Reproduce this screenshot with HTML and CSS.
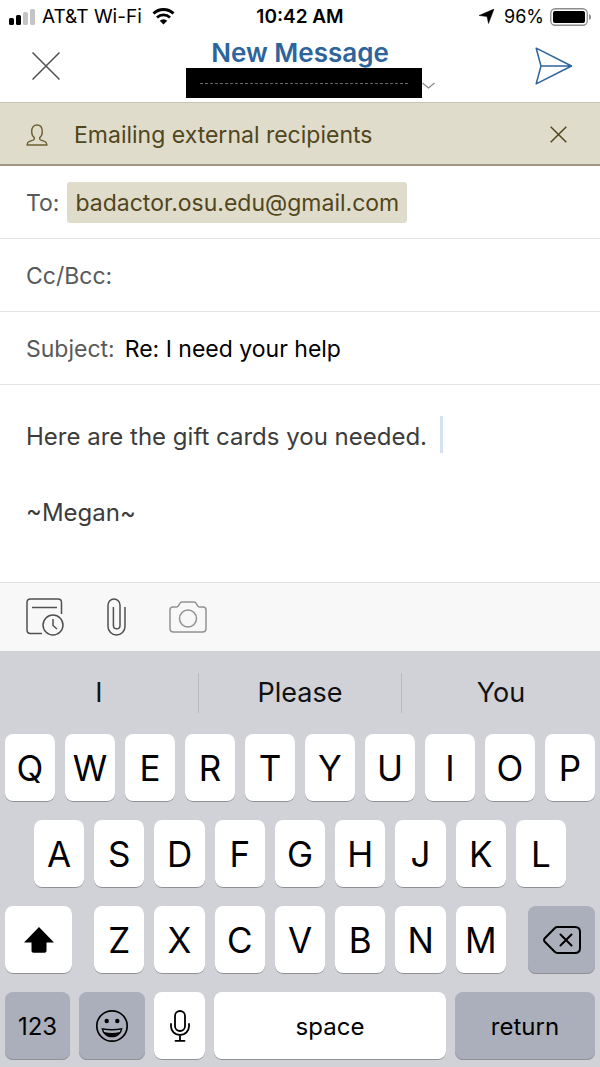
FILE: index.html
```html
<!DOCTYPE html>
<html lang="en">
<head>
  <meta charset="UTF-8">
  <meta name="viewport" content="width=device-width, initial-scale=1.0">
  <title>New Message</title>
  <link rel="stylesheet" href="styles.css">
</head>
<body>
  <div class="screen">

    <div class="status">
      <div class="status__side">
        <svg class="status__signal" width="27" height="17" viewBox="0 0 27 17">
          <rect x="1" y="10" width="5" height="7" rx="1.5" fill="#000"/>
          <rect x="8" y="7" width="5" height="10" rx="1.5" fill="#000"/>
          <rect x="15" y="4" width="5" height="13" rx="1.5" fill="#c4c4c4"/>
          <rect x="22" y="1" width="5" height="16" rx="1.5" fill="#c4c4c4"/>
        </svg>
        <span>AT&amp;T Wi-Fi</span>
        <svg class="status__wifi" width="23" height="17" viewBox="0 0 23 17">
          <path d="M1.5 5.500a14.500 14.500 0 0 1 20 0" fill="none" stroke="#000" stroke-width="3"/>
          <path d="M5 9.500a9.500 9.500 0 0 1 13 0" fill="none" stroke="#000" stroke-width="2.800"/>
          <path d="M11.500 16.500 7.800 12.800a5.300 5.300 0 0 1 7.400 0z" fill="#000"/>
        </svg>
      </div>
      <span class="status__time">10:42 AM</span>
      <div class="status__side status__side--right">
        <svg width="15" height="15" viewBox="0 0 15 15"><path d="M15 0 9.500 14.500 8 7.500 0 6.500z" fill="#000" stroke="#000" stroke-width=".500" stroke-linejoin="round"/></svg>
        <span class="status__percent">96%</span>
        <svg width="42" height="18" viewBox="0 0 42 18">
          <rect x="0.750" y="0.750" width="36.500" height="16.500" rx="4.500" fill="none" stroke="#8c8c8c" stroke-width="1.300"/>
          <rect x="3" y="3" width="32" height="12" rx="2" fill="#000"/>
          <path d="M39 6c2.700 1 2.700 5 0 6z" fill="#8c8c8c"/>
        </svg>
      </div>
    </div>

    <header class="header">
      <button class="icon-btn header__close" type="button" aria-label="Close">
        <svg width="28" height="28" viewBox="0 0 28 28"><path d="M.500.500l27 27M27.500.500l-27 27" fill="none" stroke="#505050" stroke-width="1.500"/></svg>
      </button>
      <div class="header__center">
        <h1 class="header__title">New Message</h1>
        <button class="account" type="button" aria-label="Change account">
          <span class="account__name"><span class="account__dashes"></span></span>
          <svg class="account__chevron" width="13" height="7" viewBox="0 0 13 7"><path d="M.500 1l6 5 6-5" fill="none" stroke="#8a8a8a" stroke-width="1.200"/></svg>
        </button>
      </div>
      <button class="icon-btn header__send" type="button" aria-label="Send">
        <svg width="38" height="38" viewBox="0 0 38 38"><path d="M1.200 1.200 36.500 19 1.200 36.800 6 19zM6 19h30" fill="none" stroke="#2d649c" stroke-width="1.500" stroke-linejoin="round"/></svg>
      </button>
    </header>

    <div class="banner">
      <svg width="22" height="22" viewBox="0 0 22 22"><path d="M8.300 13.600C6.600 12.500 5.700 10.500 5.700 7.500 5.700 3.500 7.700 1 11 1s5.300 2.500 5.300 6.500c0 3-.900 5-2.600 6.100v1.200c0 .800.500 1.100 1.300 1.400l3.500 1.200c1.600.600 2.300 1.600 2.500 3.600H1c.200-2 .900-3 2.500-3.600L7 16.200c.800-.300 1.300-.600 1.300-1.400z" fill="none" stroke="#6b6032" stroke-width="1.400" stroke-linejoin="round"/></svg>
      <span class="banner__text">Emailing external recipients</span>
      <button class="icon-btn" type="button" aria-label="Dismiss">
        <svg width="17" height="17" viewBox="0 0 17 17"><path d="M.700.700l15.600 15.600M16.300.700.700 16.300" fill="none" stroke="#51461c" stroke-width="1.500"/></svg>
      </button>
    </div>

    <form class="compose">
      <div class="field">
        <label class="field__label" for="to">To:</label>
        <button class="chip" type="button">badactor.osu.edu@gmail.com</button>
        <input class="field__input" id="to" type="text">
      </div>
      <div class="field">
        <label class="field__label" for="cc">Cc/Bcc:</label>
        <input class="field__input" id="cc" type="text">
      </div>
      <div class="field">
        <label class="field__label" for="subject">Subject:</label>
        <input class="field__input" id="subject" type="text" value="Re: I need your help">
      </div>
      <div class="message">
        <textarea class="message__text" aria-label="Message" rows="3">Here are the gift cards you needed.

~Megan~</textarea>
        <span class="message__caret"></span>
      </div>
    </form>

    <div class="tools">
      <button class="icon-btn" type="button" aria-label="Availability">
        <svg width="38" height="38" viewBox="0 0 38 38" fill="none" stroke="#505050" stroke-width="1.500">
          <path d="M16 35.500H4.500c-2.500 0-3.500-1-3.500-3.500V4.500C1 2 2 1 4.500 1H32c2.500 0 3.500 1 3.500 3.500V16M6 9.500h25"/>
          <circle cx="27" cy="27" r="10"/>
          <path d="M27 21v6.500l4 3.500"/>
        </svg>
      </button>
      <button class="icon-btn" type="button" aria-label="Attach file">
        <svg width="19" height="38" viewBox="0 0 19 38" fill="none" stroke="#505050" stroke-width="1.500">
          <path d="M18 9v19.500a8.500 8.500 0 0 1-17 0V7a6 6 0 0 1 12 0v20.500a3.300 3.300 0 0 1-6.600 0V9"/>
        </svg>
      </button>
      <button class="icon-btn" type="button" aria-label="Take photo">
        <svg width="38" height="32" viewBox="0 0 38 32" fill="none" stroke="#929292" stroke-width="1.500">
          <path d="M4 6h3.500c1 0 1.500-.400 2-1.300l1.200-2C11.300 1.500 12 1 13.200 1h11.600c1.200 0 1.900.500 2.500 1.700l1.200 2c.500.900 1 1.300 2 1.300H34c2 0 3 1 3 3v18.500c0 2.500-1 3.500-3.500 3.500h-29C2 31 1 30 1 27.500V9c0-2 1-3 3-3z"/>
          <circle cx="19" cy="17.500" r="8.500"/>
        </svg>
      </button>
    </div>

    <div class="keyboard">
      <div class="suggest">
        <button class="suggest__item" type="button">I</button>
        <button class="suggest__item" type="button">Please</button>
        <button class="suggest__item" type="button">You</button>
      </div>
      <div class="keys">
        <div class="keys__row">
          <button class="key" type="button">Q</button>
          <button class="key" type="button">W</button>
          <button class="key" type="button">E</button>
          <button class="key" type="button">R</button>
          <button class="key" type="button">T</button>
          <button class="key" type="button">Y</button>
          <button class="key" type="button">U</button>
          <button class="key" type="button">I</button>
          <button class="key" type="button">O</button>
          <button class="key" type="button">P</button>
        </div>
        <div class="keys__row keys__row--inset">
          <button class="key" type="button">A</button>
          <button class="key" type="button">S</button>
          <button class="key" type="button">D</button>
          <button class="key" type="button">F</button>
          <button class="key" type="button">G</button>
          <button class="key" type="button">H</button>
          <button class="key" type="button">J</button>
          <button class="key" type="button">K</button>
          <button class="key" type="button">L</button>
        </div>
        <div class="keys__row keys__row--shift">
          <button class="key" type="button" aria-label="Shift">
            <svg width="30" height="26" viewBox="0 0 30 26"><path d="M15 0 30 15.500H22.500V23.500c0 1.500-.700 2.200-2.200 2.200H9.700c-1.500 0-2.200-.700-2.200-2.200V15.500H0z" fill="#000"/></svg>
          </button>
          <div class="keys__letters">
            <button class="key" type="button">Z</button>
            <button class="key" type="button">X</button>
            <button class="key" type="button">C</button>
            <button class="key" type="button">V</button>
            <button class="key" type="button">B</button>
            <button class="key" type="button">N</button>
            <button class="key" type="button">M</button>
          </div>
          <button class="key key--dark" type="button" aria-label="Delete">
            <svg width="38" height="28" viewBox="0 0 38 28" fill="none" stroke="#000" stroke-width="2" stroke-linejoin="round" stroke-linecap="round">
              <path d="M14.500 1H32c3.500 0 5 1.500 5 5v16c0 3.500-1.500 5-5 5H14.500c-1.200 0-2-.400-2.800-1.200L2 16c-1.300-1.300-1.300-2.700 0-4l9.700-9.800C12.500 1.400 13.300 1 14.500 1z"/>
              <path d="M17.500 8.500l11 11M28.500 8.500l-11 11"/>
            </svg>
          </button>
        </div>
        <div class="keys__row keys__row--bottom">
          <button class="key key--dark key--word" type="button">123</button>
          <button class="key key--dark" type="button" aria-label="Emoji">
            <svg width="34" height="34" viewBox="0 0 34 34">
              <circle cx="17" cy="17" r="15.200" fill="none" stroke="#000" stroke-width="1.700"/>
              <circle cx="11.700" cy="12" r="2.200"/>
              <circle cx="22.300" cy="12" r="2.200"/>
              <path d="M6.500 19c6.800 1.300 14.200 1.300 21 0-.800 5.800-5 9.300-10.500 9.300S7.300 24.800 6.500 19z" fill="#000"/>
              <path d="M8.300 20.700c5.700 1 11.700 1 17.400 0l-.900 2.300c-5 1.200-10.600 1.200-15.600 0z" fill="#abafbb"/>
            </svg>
          </button>
          <button class="key" type="button" aria-label="Dictation">
            <svg width="20" height="32" viewBox="0 0 20 32" fill="none" stroke="#000" stroke-width="1.800" stroke-linecap="round">
              <rect x="5" y="1" width="10" height="20" rx="5"/>
              <path d="M1 14v2.500a9 8.500 0 0 0 18 0V14M10 25v5.500M5.500 30.800h9"/>
            </svg>
          </button>
          <button class="key key--word" type="button">space</button>
          <button class="key key--dark key--word" type="button">return</button>
        </div>
      </div>
    </div>

  </div>
</body>
</html>
```
FILE: styles.css
```css
/* Reset */
* { margin: 0; padding: 0; box-sizing: border-box; }
body { font-family: Inter, "Liberation Sans", sans-serif; font-size: 24px; background-color: #fff; color: #000; }
button, input, textarea { font: inherit; color: inherit; background: none; border: none; outline: none; }
button { cursor: pointer; }
svg { display: block; flex: none; }

.screen { display: flex; flex-direction: column; min-height: 100vh; }
.icon-btn { display: flex; align-items: center; justify-content: center; }

/* Status bar */
.status {
  display: grid;
  grid-template-columns: 1fr auto 1fr;
  align-items: center;
  height: 33px;
  padding: 0 8px;
  font-size: 19px;
}
.status__side { display: flex; align-items: center; gap: 7px; }
.status__side--right { justify-content: flex-end; gap: 6px; }
.status__wifi { margin-left: 3px; }
.status__time { font-weight: 600; }
.status__percent { margin-left: 4px; font-size: 18px; }

/* Header */
.header {
  display: grid;
  grid-template-columns: 1fr auto 1fr;
  height: 69px;
  padding: 0 27px 3px;
}
.header__close { justify-self: start; margin-left: 5px; }
.header__send { justify-self: end; }
.header__center { display: flex; flex-direction: column; align-items: center; padding-top: 5px; }
.header__title { font-size: 26px; line-height: 30px; font-weight: 600; color: #2d649c; }
.account { display: flex; align-items: center; padding-left: 20px; }
.account__name {
  display: flex;
  align-items: center;
  justify-content: center;
  width: 236px;
  height: 30px;
  background-color: #000;
}
.account__dashes { width: 208px; border-top: 1px dashed #666; }
.account__chevron { margin-top: 5px; }

/* External recipients warning */
.banner {
  display: flex;
  align-items: center;
  height: 64px;
  padding: 2px 33px 0 26px;
  background-color: #e0dccb;
  border-top: 1px solid #c9c6b8;
  border-bottom: 2px solid #a29685;
  color: #51461c;
}
.banner__text { flex: 1; margin-left: 26px; font-size: 23px; }

/* Compose form */
.compose { display: flex; flex-direction: column; flex: 1; }
.field {
  display: flex;
  align-items: center;
  height: 73px;
  padding: 1px 26px 0;
  border-bottom: 1px solid #e4e4e4;
  font-size: 23px;
}
.field__label { color: #58595b; }
.field__input { flex: 1; min-width: 0; margin-left: 10px; }
.chip {
  height: 41px;
  margin-left: 8px;
  padding: 0 8px;
  background-color: #e0dccb;
  border-radius: 3px;
  color: #51461c;
}
.message { position: relative; flex: 1; padding: 33px 26px; }
.message__text {
  display: block;
  width: 100%;
  font-size: 24px;
  line-height: 38px;
  color: #3c3c3c;
  resize: none;
}
.message__caret { position: absolute; top: 31px; left: 440px; width: 3px; height: 37px; background-color: #d6e0f5; }

/* Toolbar */
.tools {
  display: flex;
  align-items: center;
  gap: 43px;
  height: 69px;
  padding: 0 26px;
  background-color: #f8f8f8;
  border-top: 1px solid #e0e0e0;
}

/* Keyboard */
.keyboard { padding-bottom: 6px; background-color: #d1d2d8; }
.suggest { display: grid; grid-template-columns: 198fr 203fr 199fr; padding: 22px 0 21px; }
.suggest__item { height: 40px; font-size: 27px; line-height: 40px; color: #111; }
.suggest__item + .suggest__item { border-left: 1px solid #b7b9bf; }

.keys { display: grid; gap: 18px; padding: 0 5px 1px; }
.keys__row { display: grid; grid-auto-flow: column; grid-auto-columns: 1fr; gap: 10px; }
.keys__row--inset { padding: 0 29px; }
.keys__row--shift { grid-template-columns: 67fr 412fr 67fr; gap: 22px; }
.keys__letters { display: grid; grid-template-columns: repeat(7, 1fr); gap: 10px; }
.keys__row--bottom { grid-template-columns: 65fr 66fr 51fr 232fr 140fr; gap: 9px; }
.key {
  display: flex;
  align-items: center;
  justify-content: center;
  min-width: 0;
  height: 68px;
  background-color: #fff;
  border-radius: 8px;
  box-shadow: inset 0 -1px 0 #8f9196;
  font-size: 35px;
}
.key--dark { background-color: #abafbb; }
.key--word { font-size: 24px; }
```
